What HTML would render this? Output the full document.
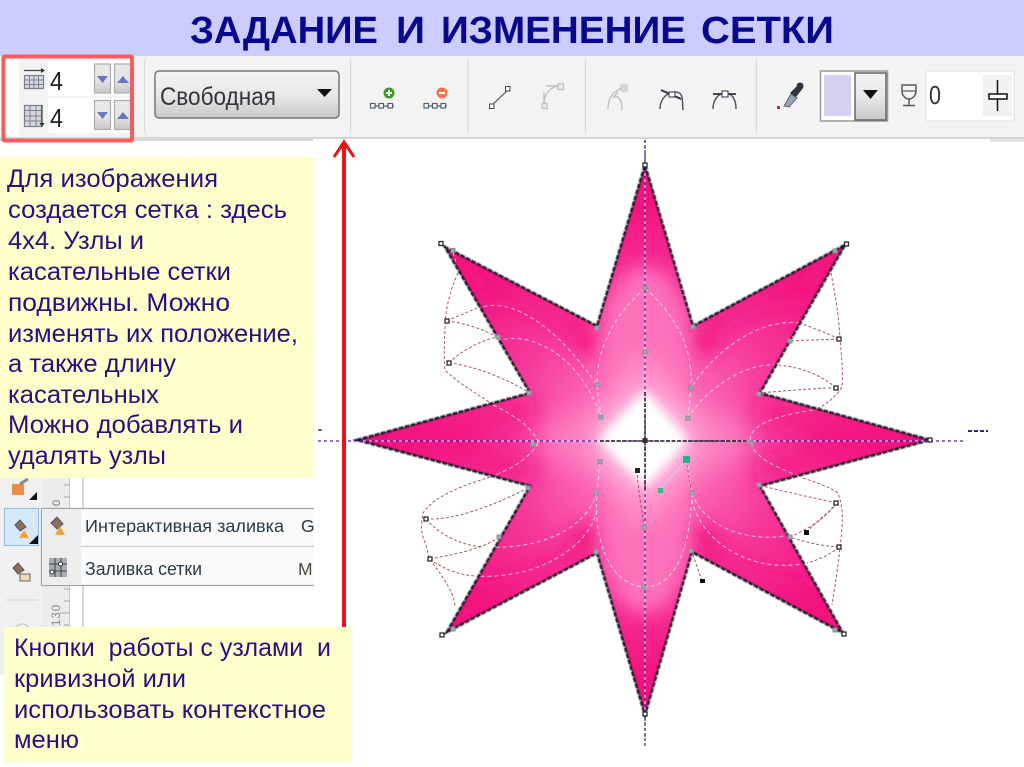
<!DOCTYPE html>
<html lang="ru"><head><meta charset="utf-8"><title>Задание и изменение сетки</title>
<style>
html,body{margin:0;padding:0;background:#fff;width:1024px;height:767px;overflow:hidden}
svg{display:block;position:absolute;left:0;top:0}
.p{font-family:"Liberation Sans",sans-serif;font-size:25px;fill:#2b0f80}
.ui{font-family:"Liberation Sans",sans-serif;fill:#333}
.t{font-family:"Liberation Sans",sans-serif;font-weight:700;font-size:38px;fill:#08088e}
</style></head><body>
<svg width="1024" height="767" viewBox="0 0 1024 767" xmlns="http://www.w3.org/2000/svg">
<defs>
<filter id="b2" x="-50%" y="-50%" width="200%" height="200%"><feGaussianBlur stdDeviation="2.500"/></filter>
<filter id="b4" x="-50%" y="-50%" width="200%" height="200%"><feGaussianBlur stdDeviation="5"/></filter>
<filter id="b8" x="-50%" y="-50%" width="200%" height="200%"><feGaussianBlur stdDeviation="9"/></filter>
<filter id="b12" x="-50%" y="-50%" width="200%" height="200%"><feGaussianBlur stdDeviation="12"/></filter>
<filter id="b20" x="-50%" y="-50%" width="200%" height="200%"><feGaussianBlur stdDeviation="16"/></filter>
<filter id="soft" x="-5%" y="-5%" width="110%" height="110%"><feGaussianBlur stdDeviation="0.4"/></filter>
<clipPath id="star"><polygon points="645,165 693,326 845,245 760,393 930,440 760,486 843,633 692,552 645,715 597,553 447,632 530,486 357,440 530,393 445,247 597,326"/></clipPath>
<linearGradient id="btn" x1="0" y1="0" x2="0" y2="1"><stop offset="0" stop-color="#f4f4f4"/><stop offset=".5" stop-color="#e8e8e8"/><stop offset="1" stop-color="#c8c8c8"/></linearGradient>
<linearGradient id="spin" x1="0" y1="0" x2="0" y2="1"><stop offset="0" stop-color="#e8e8e8"/><stop offset=".55" stop-color="#e6e6e6"/><stop offset="1" stop-color="#c6c6c6"/></linearGradient>
<radialGradient id="rg" gradientUnits="userSpaceOnUse" cx="645" cy="440" r="235"><stop offset="0" stop-color="#ffa0d4"/><stop offset=".3" stop-color="#fb66b4"/><stop offset=".6" stop-color="#f6389a"/><stop offset="1" stop-color="#f3137f"/></radialGradient>
</defs>

<!-- title -->
<rect x="0" y="0" width="1024" height="56" fill="#ccccff"/>
<text class="t" x="190" y="43" textLength="188" lengthAdjust="spacingAndGlyphs">ЗАДАНИЕ</text>
<text class="t" x="396" y="43" textLength="29" lengthAdjust="spacingAndGlyphs">И</text>
<text class="t" x="441" y="43" textLength="245" lengthAdjust="spacingAndGlyphs">ИЗМЕНЕНИЕ</text>
<text class="t" x="701" y="43" textLength="133" lengthAdjust="spacingAndGlyphs">СЕТКИ</text>

<!-- toolbar -->
<rect x="0" y="56" width="1024" height="82" fill="#f3f3f3"/>
<rect x="0" y="137" width="313" height="4" fill="#d8d8d8"/>
<rect x="313" y="137" width="711" height="2" fill="#d5d5d5"/>
<rect x="990" y="139" width="34" height="3" fill="#e4e4e4"/>
<rect x="5" y="59" width="14" height="78" fill="#fff"/>
<g stroke="#d8d8d8" stroke-width="1.2">
<line x1="144.500" y1="60" x2="144.500" y2="132"/><line x1="350.500" y1="60" x2="350.500" y2="132"/><line x1="468" y1="60" x2="468" y2="132"/><line x1="585.500" y1="60" x2="585.500" y2="132"/><line x1="756.500" y1="60" x2="756.500" y2="132"/>
</g>

<!-- spin fields -->
<rect x="48" y="61" width="84" height="35" rx="2" fill="#fff"/>
<rect x="48" y="98" width="84" height="35" rx="2" fill="#fff"/>
<text x="50" y="90" class="ui" font-size="26" textLength="13" lengthAdjust="spacingAndGlyphs" style="fill:#222">4</text>
<text x="50" y="127" class="ui" font-size="26" textLength="13" lengthAdjust="spacingAndGlyphs" style="fill:#222">4</text>
<g fill="url(#spin)" stroke="#a9aca9" stroke-width="1.2">
<rect x="94.500" y="64" width="16" height="29"/><rect x="114.500" y="64" width="16" height="29"/>
<rect x="94.500" y="100.500" width="16" height="29"/><rect x="114.500" y="100.500" width="16" height="29"/>
</g>
<g fill="#6878c0">
<polygon points="97,76 108,76 102.500,83"/><polygon points="117,83 129,83 123,76"/>
<polygon points="97,112 108,112 102.500,119"/><polygon points="117,119 129,119 123,112"/>
</g>
<!-- grid icons -->
<g stroke="#7b7f8c" stroke-width="1.2" fill="#d6d8de">
<rect x="24.500" y="75.500" width="19" height="13"/>
<rect x="24.500" y="105.500" width="17" height="21"/>
</g>
<g stroke="#7b7f8c" stroke-width="1">
<path d="M24 80H44M24 84.500H44M29.500 76V88M34 76V88M38.500 76V88" fill="none"/>
<path d="M24 110.500H42M24 116H42M24 121H42M30 106V126M36 106V126" fill="none"/>
</g>
<path d="M24 70.500H43" stroke="#444" stroke-width="1.2"/><polygon points="41,68 45,70.500 41,73" fill="#333"/>
<path d="M42 105V124" stroke="#444" stroke-width="1.2"/><polygon points="39.500,123 44.500,123 42,127" fill="#333"/>

<!-- red frame -->
<rect x="3.500" y="56.500" width="128.500" height="84" fill="none" stroke="#f45c5e" stroke-width="4" rx="1"/>

<!-- dropdown -->
<rect x="155" y="71" width="184" height="47" rx="4" fill="url(#btn)" stroke="#777" stroke-width="1.500"/>
<text x="160" y="105" class="ui" font-size="25" textLength="116" lengthAdjust="spacingAndGlyphs" style="fill:#34343c">Свободная</text>
<polygon points="317,89 332,89 324.500,97" fill="#111"/>

<!-- node +/- -->
<circle cx="389" cy="93" r="5.500" fill="#3d9b22"/><path d="M386 93H392M389 90V96" stroke="#fff" stroke-width="2"/>
<circle cx="442" cy="93" r="5.500" fill="#f0784a"/><path d="M439 93H445" stroke="#fff" stroke-width="2"/>
<g fill="#fff" stroke="#4f5f6f" stroke-width="1.200">
<path d="M372 106H394M425 106H447" fill="none"/>
<rect x="370.500" y="103.500" width="4.500" height="4.500"/><rect x="379" y="103.500" width="4.500" height="4.500"/><rect x="388" y="103.500" width="4.500" height="4.500"/>
<rect x="424" y="103.500" width="4.500" height="4.500"/><rect x="432.500" y="103.500" width="4.500" height="4.500"/><rect x="441" y="103.500" width="4.500" height="4.500"/>
</g>
<!-- line / curve -->
<path d="M492 105L508 90" stroke="#667" stroke-width="1.300"/>
<rect x="489.500" y="104" width="4.500" height="4.500" fill="#fff" stroke="#445" stroke-width="1"/>
<rect x="505.500" y="86.500" width="4.500" height="4.500" fill="#fff" stroke="#445" stroke-width="1"/>
<g stroke="#c2c2c2" stroke-width="1.400" fill="none">
<path d="M544 106C544 96 548 88 558 86"/><path d="M544 108V92M558 86H546"/>
<rect x="542" y="103.500" width="5" height="5" fill="#eee"/><rect x="558" y="84" width="5.500" height="5.500" fill="#eee"/>
</g>
<path d="M608 109C608 99 612 90 626 87M622 110C622 102 620 95 614 97L618 92" stroke="#c4c4c4" stroke-width="1.600" fill="none"/>
<rect x="621" y="85" width="6" height="6" fill="#ddd" stroke="#bbb"/>
<!-- cusp, smooth -->
<path d="M660 109C660 98 668 92 675 92C684 92 682 100 683 110" stroke="#556" stroke-width="1.500" fill="none"/>
<path d="M661 90L681 99" stroke="#334" stroke-width="2"/>
<rect x="669" y="92" width="6" height="5" fill="#fff" stroke="#334"/>
<path d="M713 109C713 98 720 93 725 93C731 93 736 98 736 109" stroke="#556" stroke-width="1.500" fill="none"/>
<path d="M713 94H736" stroke="#334" stroke-width="1.800"/><rect x="722" y="91" width="6" height="6" fill="#fff" stroke="#334"/>
<!-- eyedropper -->
<path d="M784 106L791 94L797 98L789 107Z" fill="#9aa2ac" stroke="#667" stroke-width="1"/>
<path d="M790 93L799 84L803 88L796 97Z" fill="#2f3340"/><circle cx="800" cy="86" r="3.500" fill="#2f3340"/>
<rect x="777" y="106" width="3" height="3" fill="#e01a2c"/>
<!-- colour swatch -->
<rect x="820.500" y="71" width="67" height="50" fill="#fff" stroke="#999" stroke-width="1.500"/>
<rect x="824" y="75" width="27" height="41" fill="#d5d0ef"/>
<rect x="855" y="73" width="31" height="47" fill="url(#btn)" stroke="#666" stroke-width="1.500"/>
<polygon points="863,90 878,90 870.500,99" fill="#111"/>
<!-- glass -->
<path d="M902 85H916V91C916 96 912 99 909 99C906 99 902 96 902 91Z" fill="none" stroke="#555a60" stroke-width="1.500"/><path d="M902 91H916" stroke="#555a60" stroke-width="1.200"/>
<path d="M909 99V105M903 105.500H915" stroke="#555a60" stroke-width="1.500"/>
<!-- 0 field -->
<rect x="926" y="71" width="88" height="50" rx="2" fill="#fff" stroke="#ddd"/>
<text x="929" y="104" class="ui" font-size="26" textLength="12" lengthAdjust="spacingAndGlyphs" style="fill:#333">0</text>
<rect x="983" y="75" width="29" height="41" fill="#f1f1f1"/>
<path d="M997.500 80V111" stroke="#111" stroke-width="1.500"/>
<rect x="989" y="94" width="18" height="5" fill="#fff" stroke="#111" stroke-width="1.500"/>

<!-- star -->
<g clip-path="url(#star)">
<rect x="340" y="150" width="610" height="580" fill="url(#rg)"/>
<g fill="#f3127f" filter="url(#b12)">
<path d="M445 247L600 330L585 345C540 300 490 290 470 300Z"/>
<path d="M845 245L693 326L705 345C745 300 800 290 820 300Z"/>
<path d="M447 632L597 553L590 530C550 575 500 590 470 590Z"/>
<path d="M843 633L692 552L700 530C740 575 790 590 820 590Z"/>
<path d="M357 440L530 393L540 420L470 440L540 460L530 486Z" opacity=".7"/>
<path d="M930 440L760 393L750 420L820 440L750 460L760 486Z" opacity=".7"/>
</g>
<g fill="#f3127f" filter="url(#b8)" opacity=".8">
<circle cx="585" cy="342" r="13"/><circle cx="705" cy="342" r="13"/><circle cx="585" cy="538" r="13"/><circle cx="705" cy="538" r="13"/>
</g>
<!-- vertical lobes -->
<g fill="#fd70ba" filter="url(#b8)">
<ellipse cx="645" cy="345" rx="44" ry="78"/>
<ellipse cx="645" cy="535" rx="44" ry="78"/>
</g>
<g fill="#ff8cc8" filter="url(#b12)">
<ellipse cx="645" cy="392" rx="30" ry="38"/>
<ellipse cx="645" cy="488" rx="30" ry="38"/>
</g>
<g fill="#fb7cc0" filter="url(#b12)">
<ellipse cx="578" cy="440" rx="34" ry="26"/>
<ellipse cx="712" cy="440" rx="34" ry="26"/>
</g>
<ellipse cx="645" cy="440" rx="52" ry="46" fill="#fff" filter="url(#b20)" opacity=".5"/>
<polygon points="645,390 688,440 645,488 598,440" fill="#fff" filter="url(#b4)"/>
<polygon points="645,403 674,440 645,476 615,440" fill="#fff" filter="url(#b2)"/>
</g>

<!-- white dashed mesh -->
<g fill="none" stroke="#fff" stroke-opacity=".65" stroke-width="1.100" stroke-dasharray="4 3">
<path d="M453 252L458 272"/>
<path d="M477 309C500 298 545 310 597 385"/>
<path d="M497 341C530 330 580 355 601 417"/>
<path d="M493 405C515 415 535 430 538 443"/>
<path d="M538 443C530 458 510 470 490 477"/>
<path d="M800 323C760 318 715 350 691 388"/>
<path d="M777 365C745 362 705 390 688 418"/>
<path d="M813 410C780 415 745 425 751 443"/>
<path d="M751 443C755 460 785 470 803 478"/>
<path d="M645 288C615 315 597 345 597 385L601 417"/>
<path d="M645 288C675 315 693 345 691 388L688 418"/>
<path d="M600 462L597 493C593 540 610 585 644 587C675 587 690 550 692 493L687 460"/>
<path d="M597 493C585 530 540 550 483 547"/>
<path d="M597 510C590 545 540 580 475 576"/>
<path d="M692 493C700 520 740 545 790 535"/>
<path d="M692 500C700 540 750 575 807 563"/>
<path d="M835 610L842 628M455 610L449 628"/>
</g>
<polygon points="645,165 693,326 845,245 760,393 930,440 760,486 843,633 692,552 645,715 597,553 447,632 530,486 357,440 530,393 445,247 597,326" fill="none" stroke="#1c1c28" stroke-width="2.600" stroke-dasharray="5 1.200" filter="url(#soft)"/>

<!-- guides -->
<path d="M360 441H930M645 170V712" stroke="#fff" stroke-opacity=".8" stroke-width="1.100" fill="none"/>
<g fill="none" stroke="#5a1a9a" stroke-width="1.200" stroke-dasharray="3 3">
<path d="M318 441H965"/><path d="M645 140V740"/>
</g>
<path d="M645 140V165M645 718V748" stroke="#33334a" stroke-width="1.200" stroke-dasharray="3 2"/>
<path d="M600 441H745M645 392V490" stroke="#222" stroke-width="1.500" stroke-dasharray="4 1.500"/>
<path d="M968 431H988" stroke="#33267a" stroke-width="2" stroke-dasharray="4 2"/>
<path d="M318 430H322" stroke="#444" stroke-width="1.500"/>

<!-- tangents in red-brown -->
<g fill="none" stroke="#a04a4a" stroke-opacity=".9" stroke-width="1" stroke-dasharray="3 2">
<path d="M458 273C450 290 445 310 445 330C444 350 444 362 445 370C460 385 480 395 490 403"/>
<path d="M447 321C455 317 468 312 477 308"/><path d="M447 321C465 323 485 330 497 337"/>
<path d="M449 363C460 352 480 340 498 337"/><path d="M449 363C475 366 505 378 528 392"/>
<path d="M831 273C835 295 839 315 840 339C842 360 843 375 842 387C835 398 825 405 815 410"/>
<path d="M839 339C822 340 805 340 790 341"/><path d="M839 339C825 332 812 328 800 323"/>
<path d="M836 388C815 388 785 391 759 393"/><path d="M836 388C825 378 805 367 777 365"/>
<path d="M490 477C465 485 435 495 423 513C421 525 421 530 423 537C428 550 428 555 430 559C445 580 455 595 455 607"/>
<path d="M426 519C455 520 490 507 528 488"/><path d="M426 519C440 535 460 545 483 547"/>
<path d="M430 559C450 555 480 550 498 538"/><path d="M430 559C445 570 460 575 475 576"/>
<path d="M803 478C815 482 830 487 838 493C842 505 843 515 842 527C840 555 835 585 832 605"/>
<path d="M836 503C815 498 785 492 759 485"/><path d="M836 503C825 520 805 530 790 537"/>
<path d="M839 547C820 546 805 542 790 537"/><path d="M839 547C830 555 818 560 807 563"/>
<path d="M702 581L692 552"/><path d="M806 532L836 505"/>
<path d="M637 470C638 490 642 510 644 527"/>
<path d="M686 460L692 493" stroke="#c24088"/>
</g>
<path d="M686 460L660 490" stroke="#9fe" stroke-opacity=".7" fill="none" stroke-width="1.200" stroke-dasharray="3 2"/>

<!-- nodes: handles -->
<g fill="#fff" stroke="#2a2a2a" stroke-width="1.300">
<rect x="439" y="241.500" width="4" height="4"/><rect x="844.500" y="242" width="4" height="4"/>
<rect x="445" y="319" width="4" height="4"/><rect x="447" y="361" width="4" height="4"/>
<rect x="837" y="337" width="4" height="4"/><rect x="834" y="386" width="4" height="4"/>
<rect x="424" y="517" width="4" height="4"/><rect x="428" y="557" width="4" height="4"/>
<rect x="834" y="501" width="4" height="4"/><rect x="837" y="545" width="4" height="4"/>
<rect x="440" y="633" width="4" height="4"/><rect x="842" y="632" width="4" height="4"/>
<rect x="643" y="712" width="4" height="4"/><rect x="643" y="163" width="4" height="4"/>
<rect x="928" y="438" width="4" height="4"/>
</g>
<g fill="#a0a8ae" stroke="#8a8f96" stroke-width="1">
<rect x="451" y="248.500" width="4" height="4"/><rect x="595" y="326" width="4" height="4"/>
<rect x="595" y="383" width="4" height="4"/><rect x="599" y="415" width="4" height="4"/>
<rect x="643" y="286" width="4" height="4"/><rect x="643" y="350" width="4" height="4"/>
<rect x="691" y="325" width="4" height="4"/><rect x="686" y="416" width="4" height="4"/>
<rect x="689" y="386" width="4" height="4"/><rect x="833" y="249" width="4" height="4"/>
<rect x="788" y="339" width="4" height="4"/><rect x="757" y="392" width="4" height="4"/>
<rect x="527" y="391" width="4" height="4"/><rect x="496" y="335" width="4" height="4"/>
<rect x="531" y="442" width="4" height="4"/><rect x="749" y="441" width="4" height="4"/>
<rect x="526" y="486" width="4" height="4"/><rect x="757" y="483" width="4" height="4"/>
<rect x="598" y="460" width="4" height="4"/><rect x="594" y="491" width="4" height="4"/>
<rect x="594" y="550" width="4" height="4"/><rect x="689" y="549" width="4" height="4"/>
<rect x="690" y="491" width="4" height="4"/><rect x="642" y="525" width="4" height="4"/>
<rect x="642" y="585" width="4" height="4"/><rect x="788" y="535" width="4" height="4"/>
<rect x="497" y="535" width="4" height="4"/><rect x="451" y="627" width="4" height="4"/>
<rect x="833" y="628" width="4" height="4"/>
</g>
<rect x="642.500" y="438" width="5" height="5" fill="#3a2a3a"/>
<rect x="683" y="456" width="7" height="7" fill="#23b585"/>
<rect x="658" y="488" width="5" height="5" fill="#35b58c"/>
<rect x="635" y="468" width="5" height="5" fill="#15301f"/>
<rect x="804" y="530" width="5" height="5" fill="#111"/>
<rect x="700" y="579" width="5" height="4" fill="#111"/>

<!-- red arrow -->
<rect x="342" y="143" width="4" height="484" fill="#e8141c"/>
<path d="M334 157L344 142L354 157" fill="none" stroke="#e8141c" stroke-width="3"/>

<!-- left tool panel -->
<rect x="0" y="478" width="42" height="197" fill="#f0f0f0"/>
<rect x="42" y="478" width="28" height="197" fill="#ececec"/>
<rect x="70" y="478" width="13" height="197" fill="#fff"/>
<path d="M83 478V675" stroke="#bbb" stroke-width="1.200"/>
<path d="M69.500 478V675" stroke="#c8c8c8"/>
<g stroke="#a8a8a8"><path d="M64 485H70M64 497H70M64 589H70M64 601H70M60 613H70M64 625H70"/></g>
<text transform="translate(60,506) rotate(-90)" class="ui" font-size="11" style="fill:#777">0</text>
<text transform="translate(60,626) rotate(-90)" class="ui" font-size="11.500" letter-spacing="1" style="fill:#888">130</text>
<!-- tool icons -->
<rect x="12" y="484" width="12" height="11" fill="#ec7a2a" opacity=".85"/><path d="M20 484L28 479" stroke="#888" stroke-width="3"/>
<polygon points="29,500 37,500 37,492" fill="#111"/>
<rect x="4.500" y="508.500" width="34" height="37" fill="#d6e9fa" stroke="#8ebde8"/>
<polygon points="29,544 38,544 38,535" fill="#111"/>
<path d="M15 525L20 520L26 527L20 531Z" fill="#8c6f5a" stroke="#556"/><polygon points="19,538 29,538 24,530" fill="#f2a33a"/>
<path d="M13 568L18 563L24 570L18 574Z" fill="#8c6f5a" stroke="#556"/><rect x="20" y="574" width="10" height="7" fill="#f0d8b8" stroke="#666"/>
<path d="M6 600H38" stroke="#cfcfcf"/>
<path d="M14 630C17 622 27 622 30 630" stroke="#ccc" fill="none" stroke-width="1.500"/>
<!-- flyout menu -->
<rect x="41" y="508" width="273" height="78" fill="#fafafa"/>
<path d="M314 508.500H41.500V585.500H314" fill="none" stroke="#a2a2a2" stroke-width="1.200"/>
<rect x="42" y="509" width="39" height="76" fill="#ededed"/>
<path d="M81 546.500H314" stroke="#d0d0d0" stroke-width="1.200"/>
<path d="M51 523L57 517L63 524L57 529Z" fill="#8c6f5a" stroke="#556"/><polygon points="55,535 65,535 60,526" fill="#f2a33a"/>
<rect x="49" y="558" width="18" height="19" fill="#a7adb5"/>
<path d="M49 564H67M49 571H67M55 558V577M61 558V577" stroke="#444"/>
<circle cx="60.500" cy="564" r="2" fill="#fff" stroke="#333"/><circle cx="52" cy="572" r="2" fill="#fff" stroke="#333"/>
<svg x="85" y="510" width="229" height="75" overflow="hidden">
<text x="0" y="22" class="ui" font-size="17.500" textLength="199" lengthAdjust="spacingAndGlyphs" style="fill:#2c3a44">Интерактивная заливка</text>
<text x="216" y="22" class="ui" font-size="17.500" style="fill:#2c3a44">G</text>
<text x="0" y="65" class="ui" font-size="18" textLength="117" lengthAdjust="spacingAndGlyphs" style="fill:#2c3a44">Заливка сетки</text>
<text x="213" y="65" class="ui" font-size="17.500" style="fill:#4a4a3a">M</text>
</svg>

<!-- yellow boxes -->
<rect x="0" y="157" width="314" height="321" fill="#ffffcc"/>
<text class="p" x="7" y="187" textLength="211" lengthAdjust="spacingAndGlyphs">Для изображения</text>
<text class="p" x="8" y="218" textLength="279" lengthAdjust="spacingAndGlyphs">создается сетка : здесь</text>
<text class="p" x="8" y="249" textLength="136" lengthAdjust="spacingAndGlyphs">4х4. Узлы и</text>
<text class="p" x="8" y="280" textLength="223" lengthAdjust="spacingAndGlyphs">касательные сетки</text>
<text class="p" x="8" y="311" textLength="222" lengthAdjust="spacingAndGlyphs">подвижны.  Можно</text>
<text class="p" x="8" y="342" textLength="290" lengthAdjust="spacingAndGlyphs">изменять их положение,</text>
<text class="p" x="8" y="372" textLength="168" lengthAdjust="spacingAndGlyphs">а также длину</text>
<text class="p" x="8" y="403" textLength="151" lengthAdjust="spacingAndGlyphs">касательных</text>
<text class="p" x="8" y="433" textLength="235" lengthAdjust="spacingAndGlyphs">Можно добавлять и</text>
<text class="p" x="8" y="464" textLength="158" lengthAdjust="spacingAndGlyphs">удалять узлы</text>
<rect x="4" y="627" width="348" height="135" fill="#ffffcc"/>
<text class="p" x="14" y="656" textLength="317" lengthAdjust="spacingAndGlyphs" xml:space="preserve">Кнопки  работы с узлами  и</text>
<text class="p" x="14" y="687" textLength="172" lengthAdjust="spacingAndGlyphs">кривизной или</text>
<text class="p" x="14" y="718" textLength="312" lengthAdjust="spacingAndGlyphs">использовать контекстное</text>
<text class="p" x="14" y="748" textLength="65" lengthAdjust="spacingAndGlyphs">меню</text>
</svg>
</body></html>
